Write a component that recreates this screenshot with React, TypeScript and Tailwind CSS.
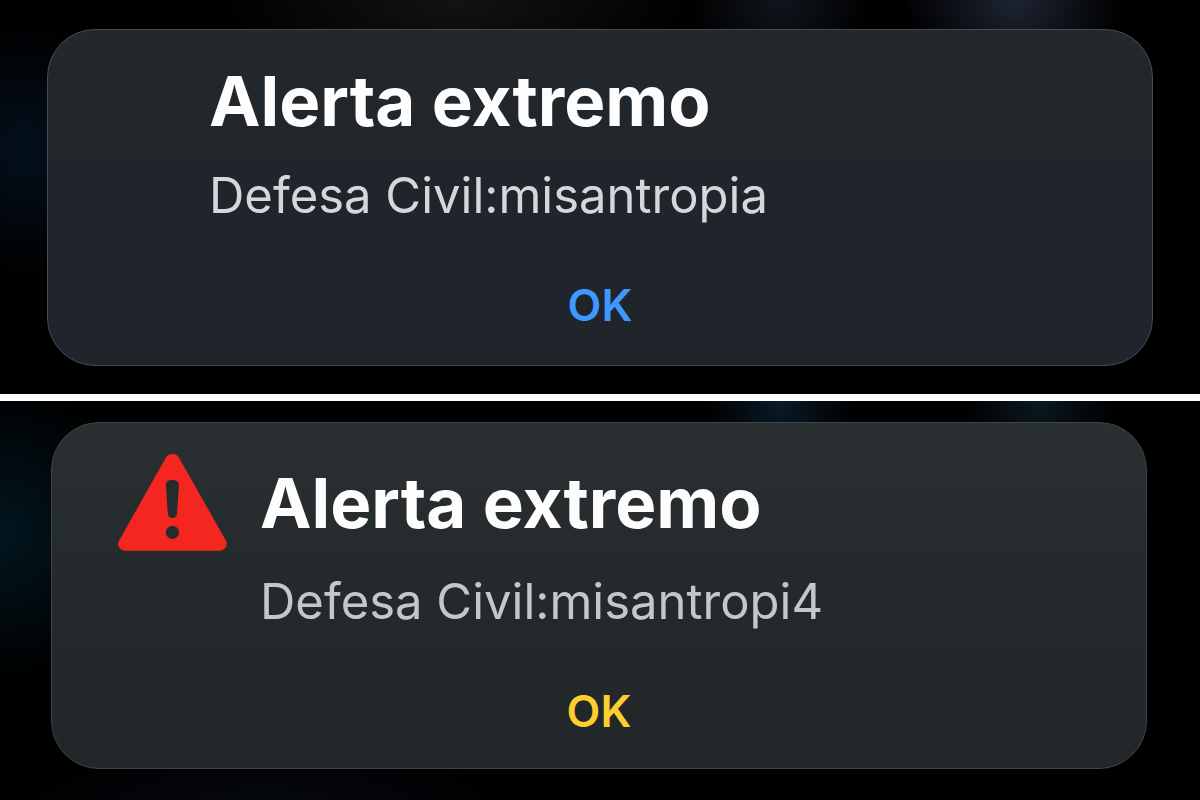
import React from "react";

interface AlertCardProps {
  title: string;
  message: string;
  variant: "info" | "danger";
}

const WarningTriangle: React.FC = () => (
  <svg className="w-[109px] h-[97px] shrink-0" viewBox="0 0 109 97" fill="none" aria-hidden="true">
    <path
      d="M47.5 4.2 Q50 0 54.4 0 Q58.8 0 61.3 4.2 L107.6 86 Q110 90.4 107.6 93.6 Q105.4 96.7 101.5 96.7 H7.3 Q3.4 96.7 1.2 93.6 Q-1 90.4 1.4 86 Z"
      fill="#f3271f"
    />
    <path
      d="M47.9 31 Q47.9 26 54.4 26 Q60.9 26 60.9 31 L59 59.6 Q58.6 64 54.4 64 Q50.2 64 49.8 59.6 Z"
      fill="#262b2e"
    />
    <circle cx="54.4" cy="78.4" r="6.6" fill="#262b2e" />
  </svg>
);

const AlertCard: React.FC<AlertCardProps> = ({ title, message, variant }) => {
  const danger = variant === "danger";

  return (
    <section
      role="alertdialog"
      aria-label={title}
      className={`flex flex-col rounded-[48px] border ${
        danger
          ? "border-[#3f4446] bg-linear-to-b from-[#2a2f31] via-[#24292c] to-[#212628] pt-[31px] pb-[29px]"
          : "border-[#484c50] bg-linear-to-b from-[#22282b] via-[#20252b] to-[#20242b] pt-[29px] pb-8"
      }`}
    >
      <div className={`flex items-start gap-[33px] ${danger ? "pl-[66px]" : "pl-[161px]"}`}>
        {danger && <WarningTriangle />}
        <div className={`flex flex-col ${danger ? "pt-[7px] gap-[26px]" : "gap-[22px]"}`}>
          <h2 className="text-[69px] leading-[84px] font-bold text-[#fdfdfe]">{title}</h2>
          <p
            className={`text-[49px] leading-[62px] font-normal ${
              danger ? "text-[#c4c7ca]" : "text-[#d4d7dc]"
            }`}
          >
            {message}
          </p>
        </div>
      </div>

      <button
        type="button"
        className={`self-center mt-[50px] text-[44px] leading-[56px] font-semibold cursor-pointer ${
          danger ? "text-[#fdce30]" : "text-[#3f98fe]"
        }`}
      >
        OK
      </button>
    </section>
  );
};

export default function App() {
  return (
    <main className="min-h-screen bg-black font-['Inter',sans-serif]">
      {/* Dark wallpaper with faint glows behind the first alert */}
      <div className="bg-black bg-[radial-gradient(ellipse_110px_90px_at_84.5%_0%,#1d2433,transparent),radial-gradient(ellipse_90px_80px_at_65%_0%,#11161d,transparent),radial-gradient(ellipse_240px_90px_at_38%_0%,#131313,transparent),radial-gradient(ellipse_110px_130px_at_2%_38%,#03101c,transparent)] px-[47px] pt-[29px] pb-7">
        <AlertCard title="Alerta extremo" message="Defesa Civil:misantropia" variant="info" />
      </div>

      <hr className="h-[7px] border-0 bg-white" />

      <div className="bg-black bg-[radial-gradient(ellipse_75px_80px_at_65%_0%,#0a1b28,transparent),radial-gradient(ellipse_75px_80px_at_86.5%_0%,#0a1921,transparent),radial-gradient(ellipse_140px_150px_at_0%_33%,#02161f,transparent),radial-gradient(ellipse_260px_50px_at_22%_100%,#05080f,transparent)] pl-[51px] pr-[53px] pt-[21px] pb-[31px]">
        <AlertCard title="Alerta extremo" message="Defesa Civil:misantropi4" variant="danger" />
      </div>
    </main>
  );
}
